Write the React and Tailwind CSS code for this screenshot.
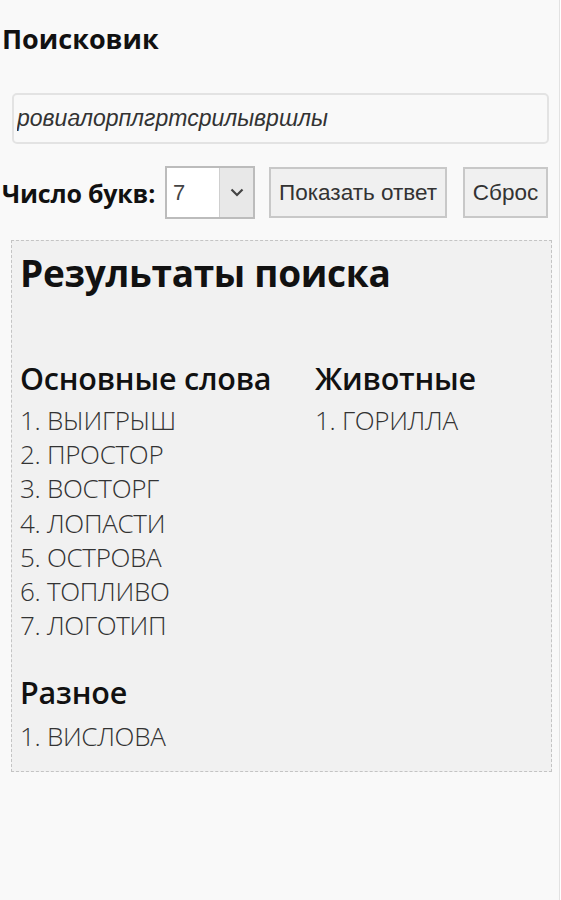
import React, { useState } from "react";

const groups = [
  { title: "Основные слова", words: ["ВЫИГРЫШ", "ПРОСТОР", "ВОСТОРГ", "ЛОПАСТИ", "ОСТРОВА", "ТОПЛИВО", "ЛОГОТИП"] },
  { title: "Животные", words: ["ГОРИЛЛА"] },
];

const WordGroup = ({ title, words, gap = "mt-[8px]" }) => (
  <div className="flex flex-col">
    <h3 className="text-[30.5px] leading-[34px] font-semibold text-[#111] tracking-[-0.2px]">{title}</h3>
    <ol className={`${gap} flex flex-col`}>
      {words.map((w, i) => (
        <li key={w} className="text-[26px] leading-[34.2px] text-[#333] font-light tracking-[-0.3px]">
          {i + 1}. {w}
        </li>
      ))}
    </ol>
  </div>
);

const App = () => {
  const [query, setQuery] = useState("ровиалорплгртсрилывршлы");
  const [count, setCount] = useState("7");

  return (
    <div className="min-h-[900px] w-[560px] bg-[#f9f9f9] border-r border-[#e2e2e2] font-['Open_Sans',sans-serif]">
      <div className="pt-[24px] pl-[2px]">
        <h1 className="text-[27px] leading-[30px] font-bold text-[#111]">Поисковик</h1>

        <div className="mt-[39px] ml-[10px]">
          <input
            value={query}
            onChange={(e) => setQuery(e.target.value)}
            className="w-[537px] h-[51px] rounded-[5px] border-2 border-[#e3e3e3] bg-[#f9f9f9] px-[3px] text-[23px] italic text-[#333] font-['Liberation_Sans',Arial,sans-serif] outline-none"
          />
        </div>

        <div className="mt-[22px] flex items-center whitespace-nowrap">
          <label className="shrink-0 text-[25px] leading-[30px] font-bold text-[#111] tracking-[-0.2px]">Число букв:</label>
          <div className="shrink-0 ml-[10px] flex h-[53px] w-[90px] border-2 border-[#bcbcbc] bg-white">
            <div className="flex-1 flex items-center pl-[6px] text-[22px] text-[#444] font-['Liberation_Sans',Arial,sans-serif]">
              {count}
            </div>
            <div className="w-[34px] flex items-center justify-center bg-[#e8e8e8] border-l border-[#cfcfcf]">
              <svg width="14" height="9" viewBox="0 0 14 9" fill="none">
                <path d="M1.5 1.5 L7 7 L12.5 1.5" stroke="#444" strokeWidth="2.2" />
              </svg>
            </div>
          </div>
          <button
            onClick={() => setCount("7")}
            className="shrink-0 ml-[14px] h-[51px] w-[178px] border-2 border-[#c8c8c8] bg-[#f0f0f0] text-[22.5px] text-[#333] font-['Liberation_Sans',Arial,sans-serif]"
          >
            Показать ответ
          </button>
          <button className="shrink-0 ml-[16px] h-[51px] w-[85px] border-2 border-[#c8c8c8] bg-[#f0f0f0] text-[22.5px] text-[#333] font-['Liberation_Sans',Arial,sans-serif]">
            Сброс
          </button>
        </div>
      </div>

      <div className="mt-[21px] ml-[11px] w-[541px] border border-dashed border-[#c4c4c4] bg-[#f1f1f1] px-[8px] pt-[10px] pb-[17px]">
        <h2 className="text-[37px] leading-[44px] font-bold text-[#111] tracking-[-0.3px]">Результаты поиска</h2>

        <div className="mt-[66px] grid grid-cols-[295px_1fr]">
          {groups.map((g) => (
            <WordGroup key={g.title} {...g} />
          ))}
        </div>

        <div className="mt-[33px]">
          <WordGroup title="Разное" words={["ВИСЛОВА"]} gap="mt-[10px]" />
        </div>
      </div>
    </div>
  );
};

export default App;
